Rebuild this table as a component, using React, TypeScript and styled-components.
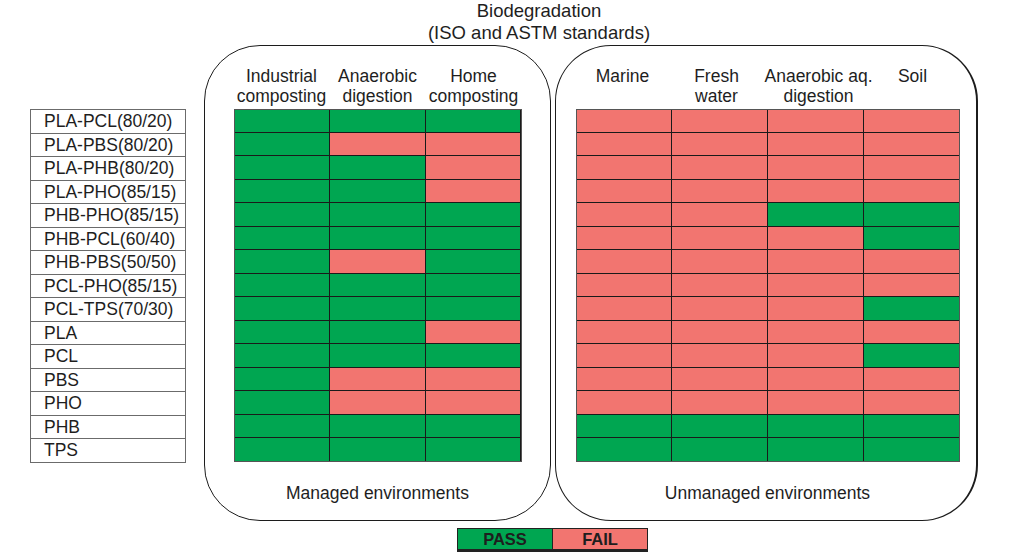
import * as React from 'react';
import styled, { createGlobalStyle } from 'styled-components';

const GlobalStyle = createGlobalStyle`
  body {
    margin: 0;
    background: #ffffff;
    font-family: "Liberation Sans", Arial, sans-serif;
    color: #1e1e1e;
  }
`;

const PASS = '#00a651';
const FAIL = '#f27570';

const Page = styled.div`
  width: 1011px;
  height: 560px;
  overflow: hidden;
  background: #fff;
`;

const Title = styled.div`
  height: 45px;
  padding-left: 67px;
  box-sizing: border-box;
  text-align: center;
  font-size: 18.5px;
  line-height: 22px;
`;

const Main = styled.div`
  display: flex;
  align-items: flex-start;
`;

const LabelColumn = styled.div`
  display: flex;
  flex-direction: column;
  width: 156px;
  margin-left: 30px;
  margin-top: 64px;
`;

const Label = styled.div`
  height: 24.5px;
  box-sizing: border-box;
  border: 1px solid #6b6b6b;
  padding-left: 13px;
  font-size: 17.5px;
  line-height: 22px;
  white-space: nowrap;
  & + & {
    margin-top: -1px;
  }
`;

const Panel = styled.div<{ $width: number; $gap: number; $right?: boolean }>`
  width: ${p => p.$width}px;
  height: 476px;
  margin-left: ${p => p.$gap}px;
  padding-left: ${p => (p.$right ? 3 : 0)}px;
  box-sizing: border-box;
  border: 1.5px solid #1c1c1c;
  border-right-width: ${p => (p.$right ? 2.5 : 1.5)}px;
  border-radius: 56px;
  display: flex;
  flex-direction: column;
  align-items: center;
`;

const HeaderRow = styled.div<{ $width: number }>`
  width: ${p => p.$width}px;
  height: 62.5px;
  box-sizing: border-box;
  padding-top: 20px;
  display: flex;
`;

const HeaderCell = styled.div<{ $shift?: number }>`
  flex: 1 1 0;
  min-width: 0;
  display: flex;
  flex-direction: column;
  align-items: center;
  margin-left: ${p => p.$shift || 0}px;
  font-size: 17.5px;
  line-height: 20px;
  white-space: nowrap;
`;

const Grid = styled.div<{ $width: number; $cols: number }>`
  width: ${p => p.$width}px;
  height: 353px;
  box-sizing: border-box;
  display: grid;
  grid-template-columns: repeat(${p => p.$cols}, 1fr);
  grid-template-rows: repeat(15, 1fr);
  gap: 1px;
  background: #1a1a1a;
  border: 1px solid #555;
`;

const Cell = styled.div<{ $pass: boolean }>`
  background: ${p => (p.$pass ? PASS : FAIL)};
`;

const Footer = styled.div`
  margin-top: 21px;
  font-size: 17.5px;
  line-height: 20px;
`;

const Legend = styled.div`
  display: flex;
  margin-left: 457px;
  margin-top: 7px;
`;

const LegendBox = styled.div<{ $pass: boolean; $width: number }>`
  width: ${p => p.$width}px;
  height: 24px;
  box-sizing: border-box;
  border: 1px solid #222;
  border-bottom-width: 3px;
  background: ${p => (p.$pass ? PASS : FAIL)};
  display: flex;
  align-items: center;
  justify-content: center;
  font-size: 16.5px;
  font-weight: bold;
  color: #1e1e1e;
  & + & {
    border-left: none;
  }
`;

const labels = [
  'PLA-PCL(80/20)',
  'PLA-PBS(80/20)',
  'PLA-PHB(80/20)',
  'PLA-PHO(85/15)',
  'PHB-PHO(85/15)',
  'PHB-PCL(60/40)',
  'PHB-PBS(50/50)',
  'PCL-PHO(85/15)',
  'PCL-TPS(70/30)',
  'PLA',
  'PCL',
  'PBS',
  'PHO',
  'PHB',
  'TPS'
];

// 1 = pass, 0 = fail
const managed = [
  '111', '100', '110', '110', '111', '111', '101', '111',
  '111', '110', '111', '100', '100', '111', '111'
];
const unmanaged = [
  '0000', '0000', '0000', '0000', '0011', '0001', '0000', '0000',
  '0001', '0000', '0001', '0000', '0000', '1111', '1111'
];

const managedHeads = [['Industrial', 'composting'], ['Anaerobic', 'digestion'], ['Home', 'composting']];
const unmanagedHeads = [['Marine'], ['Fresh', 'water'], ['Anaerobic aq.', 'digestion'], ['Soil']];

const Block = (props: {
  width: number;
  gap: number;
  gridWidth: number;
  heads: string[][];
  rows: string[];
  footer: string;
  right?: boolean;
}) => (
  <Panel $width={props.width} $gap={props.gap} $right={props.right}>
    <HeaderRow $width={props.gridWidth}>
      {props.heads.map((h, i) => (
        <HeaderCell key={i} $shift={props.right && i === 2 ? 8 : 0}>
          {h.map(line => (
            <span key={line}>{line}</span>
          ))}
        </HeaderCell>
      ))}
    </HeaderRow>
    <Grid $width={props.gridWidth} $cols={props.heads.length}>
      {props.rows.map((r, ri) =>
        r.split('').map((c, ci) => <Cell key={`${ri}-${ci}`} $pass={c === '1'} />)
      )}
    </Grid>
    <Footer>{props.footer}</Footer>
  </Panel>
);

export default function App() {
  return (
    <Page>
      <GlobalStyle />
      <Title>
        Biodegradation
        <br />
        (ISO and ASTM standards)
      </Title>
      <Main>
        <LabelColumn>
          {labels.map(l => (
            <Label key={l}>{l}</Label>
          ))}
        </LabelColumn>
        <Block
          width={347}
          gap={18}
          gridWidth={288}
          heads={managedHeads}
          rows={managed}
          footer="Managed environments"
        />
        <Block
          width={423}
          gap={4}
          gridWidth={384}
          heads={unmanagedHeads}
          rows={unmanaged}
          footer="Unmanaged environments"
          right
        />
      </Main>
      <Legend>
        <LegendBox $pass $width={96}>PASS</LegendBox>
        <LegendBox $pass={false} $width={95}>FAIL</LegendBox>
      </Legend>
    </Page>
  );
}
